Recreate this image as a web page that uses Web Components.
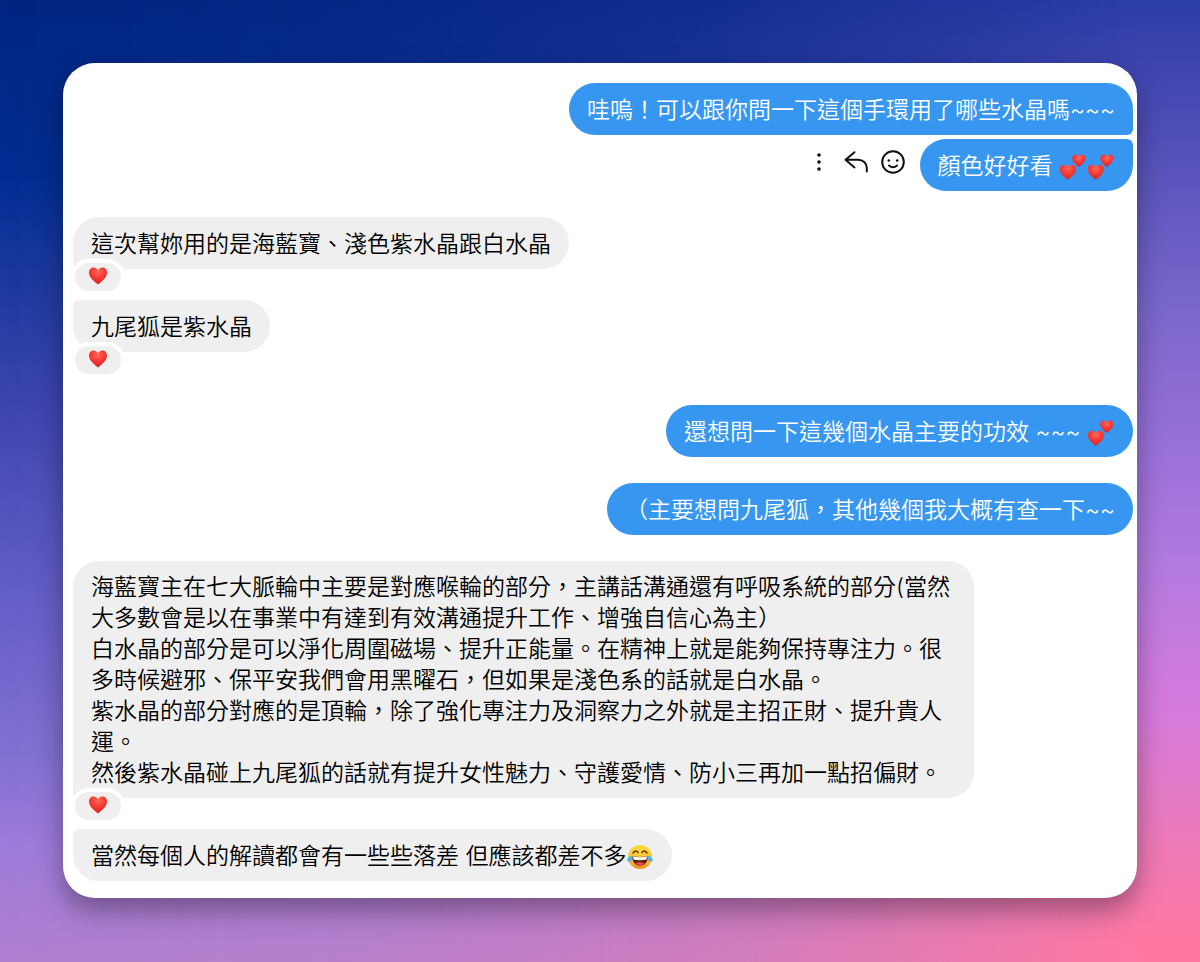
<!DOCTYPE html>
<html lang="zh-Hant">
<head>
<meta charset="utf-8">
<meta name="viewport" content="width=device-width, initial-scale=1">
<title>聊天</title>
<style>
    body {
        box-sizing: border-box;
        min-height: 100vh;
        margin: 0;
        padding: 63px;
        font: 350 23px/31px Inter, "Noto Sans CJK TC", sans-serif;
        background: linear-gradient(#002480 0%, #002d92 18%, #3c45ae 42%, #6660c8 63%, #8070d2 78%, #a07cda 89%, #b080d0 100%) fixed;
    }

    /* warmer wash that fades in towards the right edge */
    body::before {
        content: '';
        position: fixed;
        inset: 0;
        z-index: -1;
        background: linear-gradient(#2c3ca8 0%, #5350b8 15%, #7866cc 31%, #9870d8 46%, #b47ae0 59%, #d67adc 74%, #ee7ab8 88%, #ff78a2 98%);
        mask-image: linear-gradient(to right, transparent 0%, rgba(0, 0, 0, .1) 30%, rgba(0, 0, 0, .4) 60%, #000 95%);
    }
</style>
</head>
<body>
<chat-card>
    <chat-group side="out">
        <chat-message>哇嗚！可以跟你問一下這個手環用了哪些水晶嗎~~~</chat-message>
        <chat-message><message-actions slot="actions"></message-actions>顏色好好看 <chat-emoji name="hearts"></chat-emoji><chat-emoji name="hearts"></chat-emoji></chat-message>
    </chat-group>
    <chat-group side="in">
        <chat-message reaction="heart">這次幫妳用的是海藍寶、淺色紫水晶跟白水晶</chat-message>
        <chat-message reaction="heart">九尾狐是紫水晶</chat-message>
    </chat-group>
    <chat-group side="out">
        <chat-message>還想問一下這幾個水晶主要的功效 ~~~ <chat-emoji name="hearts"></chat-emoji></chat-message>
    </chat-group>
    <chat-group side="out">
        <chat-message>（主要想問九尾狐，其他幾個我大概有查一下~~</chat-message>
    </chat-group>
    <chat-group side="in">
        <chat-message reaction="heart">海藍寶主在七大脈輪中主要是對應喉輪的部分，主講話溝通還有呼吸系統的部分(當然大多數會是以在事業中有達到有效溝通提升工作、增強自信心為主）<br>白水晶的部分是可以淨化周圍磁場、提升正能量。在精神上就是能夠保持專注力。很多時候避邪、保平安我們會用黑曜石，但如果是淺色系的話就是白水晶。<br>紫水晶的部分對應的是頂輪，除了強化專注力及洞察力之外就是主招正財、提升貴人運。<br>然後紫水晶碰上九尾狐的話就有提升女性魅力、守護愛情、防小三再加一點招偏財。</chat-message>
        <chat-message>當然每個人的解讀都會有一些些落差 但應該都差不多<chat-emoji name="joy"></chat-emoji></chat-message>
    </chat-group>
</chat-card>

<script>
const HEART = 'M10 18.6C8.2 16.6 1 12.4 1 6.4c0-3 2.1-5 4.6-5 2 0 3.6 1.1 4.4 2.9.8-1.8 2.4-2.9 4.4-2.9 2.5 0 4.6 2 4.6 5 0 6-7.2 10.2-9 12.2z';

const heartFill = `
    <defs><radialGradient id="red" cx=".5" cy=".25" r=".75">
        <stop offset="0" stop-color="#ff6a58"/><stop offset=".5" stop-color="#f73a35"/><stop offset="1" stop-color="#d6201f"/>
    </radialGradient></defs>`;

const EMOJI = {
    heart: {
        label: '愛心',
        box: '0 0 20 20',
        art: `${heartFill}<path d="${HEART}" fill="url(#red)"/>`
    },
    hearts: {
        label: '兩顆愛心',
        box: '0 0 28 28',
        art: `${heartFill}
            <path d="${HEART}" fill="url(#red)" transform="translate(0 10.5) scale(.88)"/>
            <path d="${HEART}" fill="url(#red)" transform="translate(12.5 .5) scale(.73)"/>`
    },
    joy: {
        label: '笑到流淚',
        box: '0 0 28 28',
        art: `
            <defs><linearGradient id="face" x2="0" y2="1">
                <stop offset="0" stop-color="#fbdc3f"/><stop offset=".6" stop-color="#fcc233"/><stop offset="1" stop-color="#ee8a1c"/>
            </linearGradient></defs>
            <circle cx="14" cy="14" r="12" fill="url(#face)"/>
            <path d="M7 10q2.5-3.6 5-.6M16 9.4q2.5-3 5 .6" fill="none" stroke="#5f3413" stroke-width="1.5" stroke-linecap="round"/>
            <path d="M6.3 13.3q7.7 1.4 15.4 0c.6 5-3 9.4-7.7 9.4s-8.3-4.4-7.7-9.4z" fill="#5f1c12"/>
            <path d="M7 13.6q7 1.2 14 0l-.5 3q-6.5 1.2-13 0z" fill="#fff"/>
            <path d="M9.5 20.6q4.5-3.2 9 0-4.5 4-9 0z" fill="#ee4b57"/>
            <path d="M7 12.5c-3 .3-5.5 2-5.8 4.2-.2 2 2.3 2.8 3.8 1.3 1.3-1.4 1.2-3.6 2-5.5zM21 12.5c3 .3 5.5 2 5.8 4.2.2 2-2.3 2.8-3.8 1.3-1.3-1.4-1.2-3.6-2-5.5z" fill="#4fb6e8"/>`
    }
};

class ChatEmoji extends HTMLElement {
    connectedCallback() {
        const {label, box, art} = EMOJI[this.getAttribute('name')];
        this.attachShadow({mode: 'open'}).innerHTML = `
        <style>
            :host{display:inline-block;width:28px;height:28px;vertical-align:-7px}
            :host([name=heart]){width:20px;height:20px}
            svg{display:block;width:100%;height:100%}
        </style>
        <svg viewBox="${box}" role="img" aria-label="${label}">${art}</svg>`;
    }
}

class MessageActions extends HTMLElement {
    connectedCallback() {
        this.attachShadow({mode: 'open'}).innerHTML = `
        <style>
            :host{display:flex;gap:13px;padding-bottom:6px}
            button{padding:0;border:0;background:none;color:#111;cursor:pointer}
            svg{display:block;width:24px;height:24px;fill:none;stroke:currentColor;stroke-width:2;stroke-linecap:round;stroke-linejoin:round}
            .dot{fill:currentColor;stroke:none}
        </style>
        <button type="button" aria-label="更多">
            <svg viewBox="0 0 24 24"><g class="dot"><circle cx="12" cy="5" r="1.8"/><circle cx="12" cy="12" r="1.8"/><circle cx="12" cy="19" r="1.8"/></g></svg>
        </button>
        <button type="button" aria-label="回覆">
            <svg viewBox="0 0 24 24"><path d="M10.5 2.2L1.5 9.8l9 7.6M1.5 9.8H14c5 0 8.8 3.4 8.8 8.2v3.5"/></svg>
        </button>
        <button type="button" aria-label="表情">
            <svg viewBox="0 0 24 24"><circle cx="12" cy="12" r="10.8"/><path d="M8 15.5q4 3.6 8 0"/><g class="dot"><circle cx="7.8" cy="10.5" r="1.3"/><circle cx="16.2" cy="10.5" r="1.3"/></g></svg>
        </button>`;
    }
}

class ChatMessage extends HTMLElement {
    connectedCallback() {
        const reaction = this.getAttribute('reaction');
        this.attachShadow({mode: 'open'}).innerHTML = `
        <style>
            :host{display:flex;align-items:center;justify-content:var(--side);gap:15px}
            :host([reaction]){margin-bottom:27px}
            .bubble{position:relative;box-sizing:border-box;display:flex;align-items:center;min-height:52px;max-width:85%;padding:11px 18px 9px;border-radius:var(--corners,26px);color:var(--ink);background:var(--fill)}
            .reaction{position:absolute;top:calc(100% - 6px);left:2px;display:grid;place-items:center;width:46px;height:28px;padding:0 0 3px;border:0;border-radius:14px;background:#efefef;box-shadow:0 0 0 4px #fff;cursor:pointer}
        </style>
        <slot name="actions"></slot>
        <div class="bubble">
            <div><slot></slot></div>
            ${reaction ? `<button class="reaction" type="button" aria-label="回應"><chat-emoji name="${reaction}"></chat-emoji></button>` : ''}
        </div>`;
    }
}

class ChatGroup extends HTMLElement {
    connectedCallback() {
        this.attachShadow({mode: 'open'}).innerHTML = `
        <style>
            :host{display:flex;flex-direction:column;gap:4px}
            :host([side=out]){--side:flex-end;--ink:#fff;--fill:#3797f0}
            :host([side=in]){--side:flex-start;--ink:#000;--fill:#efefef}
            :host([side=out]) ::slotted(:first-child:not(:last-child)){--corners:26px 26px 6px 26px}
            :host([side=out]) ::slotted(:last-child:not(:first-child)){--corners:26px 6px 26px 26px}
            :host([side=in]) ::slotted(:first-child:not(:last-child)){--corners:26px 26px 26px 6px}
            :host([side=in]) ::slotted(:last-child:not(:first-child)){--corners:6px 26px 26px 26px}
        </style>
        <slot></slot>`;
    }
}

class ChatCard extends HTMLElement {
    connectedCallback() {
        this.attachShadow({mode: 'open'}).innerHTML = `
        <style>
            :host{display:flex;flex-direction:column;gap:26px;padding:20px 4px 17px 10px;border-radius:32px;background:#fff;box-shadow:0 12px 28px rgba(0,0,0,.36)}
        </style>
        <slot></slot>`;
    }
}

customElements.define('chat-emoji', ChatEmoji);
customElements.define('message-actions', MessageActions);
customElements.define('chat-message', ChatMessage);
customElements.define('chat-group', ChatGroup);
customElements.define('chat-card', ChatCard);
</script>
</body>
</html>
